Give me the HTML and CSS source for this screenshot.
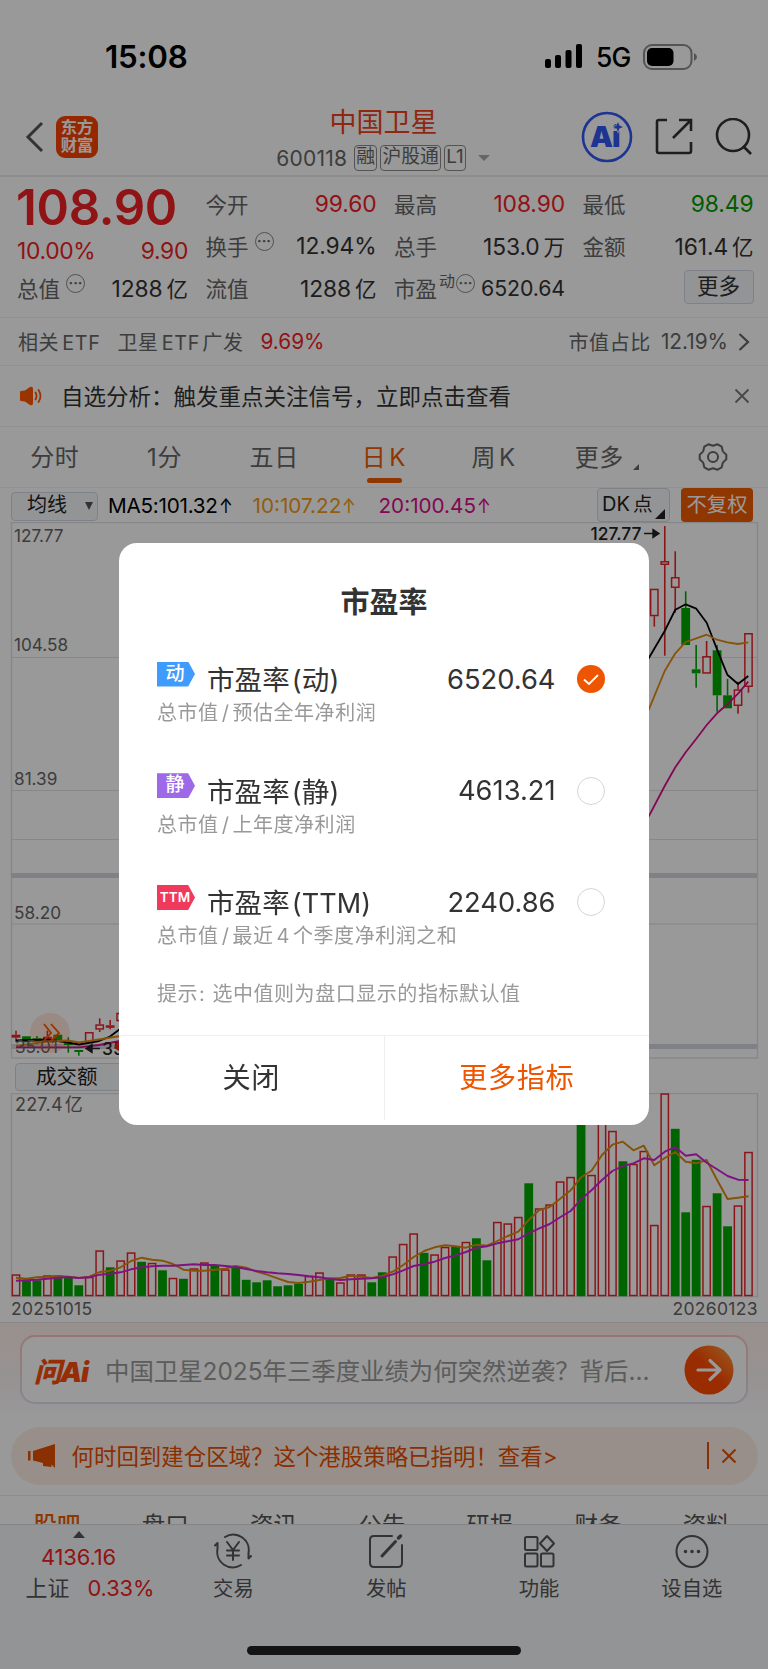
FILE: index.html
```html
<!DOCTYPE html>
<html lang="zh-CN">
<head>
<meta charset="utf-8" />
<title>中国卫星 600118</title>
<link rel="stylesheet" href="styles.css">
</head>

<body>
<div class="page">
	<div class="status">
		<span class="time">15:08</span>
		<svg class="signal" width="40" height="26" viewBox="0 0 40 26"><rect x="1" y="16" width="6" height="9" rx="2"/><rect x="11" y="12" width="6" height="13" rx="2"/><rect x="21.500" y="7" width="6" height="18" rx="2"/><rect x="32" y="1" width="6" height="24" rx="2"/></svg>
		<span class="net">5G</span>
		<svg class="battery" width="56" height="26" viewBox="0 0 56 26"><rect x="1" y="1" width="47.500" height="24" rx="8" fill="none" stroke="#8c8c8c" stroke-width="2"/><rect x="4" y="4" width="26.500" height="18" rx="5"/><path d="M51 9q3 1.500 3 4t-3 4z" fill="#8c8c8c"/></svg>
	</div>

	<div class="header">
		<svg class="back" width="20" height="32" viewBox="0 0 20 32"><path d="M17 2L3 16L17 30"/></svg>
		<div class="logo">东方<br>财富</div>
		<div class="title">
			<h1>中国卫星</h1>
			<p><span class="code">600118</span><i>融</i><i>沪股通</i><i>L1</i><b></b></p>
		</div>
		<svg class="ai" width="52" height="52" viewBox="0 0 52 52"><circle cx="26" cy="26" r="24" fill="none" stroke="#3158f5" stroke-width="2.600"/><text x="9" y="36">Ai</text><path d="M37 11l1.400 3.600l3.600 1.400l-3.600 1.400l-1.400 3.600l-1.400-3.600l-3.600-1.400l3.600-1.400z"/></svg>
		<svg class="share" width="38" height="38" viewBox="0 0 38 38"><path d="M12 2H4Q2 2 2 4V33Q2 35 4 35H34Q36 35 36 33V24M24 2H36V13M36 2L18 20"/></svg>
		<svg class="search" width="38" height="38" viewBox="0 0 38 38"><circle cx="18" cy="17" r="16"/><path d="M28 28L36 36"/></svg>
	</div>

	<div class="quote">
		<div class="col">
			<div class="price">108.90</div>
			<div class="row red chg"><span>10.00%</span><span>9.90</span></div>
			<div class="row"><label>总值<u>···</u></label><span>1288<em>亿</em></span></div>
		</div>
		<div class="col">
			<div class="row"><label>今开</label><span class="red">99.60</span></div>
			<div class="row"><label>换手<u>···</u></label><span>12.94%</span></div>
			<div class="row"><label>流值</label><span>1288<em>亿</em></span></div>
		</div>
		<div class="col">
			<div class="row"><label>最高</label><span class="red">108.90</span></div>
			<div class="row"><label>总手</label><span>153.0<em>万</em></span></div>
			<div class="row"><label>市盈<sup>动</sup><u>···</u></label><span class="pe">6520.64</span></div>
		</div>
		<div class="col">
			<div class="row"><label>最低</label><span class="green">98.49</span></div>
			<div class="row"><label>金额</label><span>161.4<em>亿</em></span></div>
			<div class="row end"><a class="more">更多</a></div>
		</div>
	</div>

	<div class="etf">
		<span class="rel">相关<small>ETF</small></span>
		<span class="fund">卫星<small>ETF</small>广发</span>
		<span class="red pct">9.69%</span>
		<span class="ratio">市值占比</span>
		<span class="pct">12.19%</span>
		<svg width="12" height="20" viewBox="0 0 12 20"><path d="M1.500 2L10 10L1.500 18"/></svg>
	</div>

	<div class="notice">
		<svg width="24" height="20" viewBox="0 0 24 20"><path d="M1 6Q1 5 2 5L6 4.500L11 1Q14 0 14 3V17Q14 20 11 19L6 15.500L2 15Q1 15 1 14z" fill="#ff5500"/><path d="M16.500 6.500Q18.500 10 16.500 13.500M19.500 4Q23.500 10 19.500 16" fill="none" stroke="#ff5500" stroke-width="1.800" stroke-linecap="round"/></svg>
		<span>自选分析：触发重点关注信号，立即点击查看</span>
		<svg class="close" width="16" height="16" viewBox="0 0 16 16"><path d="M1.500 1.500L14.500 14.500M14.500 1.500L1.500 14.500"/></svg>
	</div>

	<div class="tabs">
		<a>分时</a>
		<a>1分</a>
		<a>五日</a>
		<a class="on">日<small>K</small></a>
		<a>周<small>K</small></a>
		<a class="drop">更多</a>
		<a><svg width="30" height="30" viewBox="-1 -1 30 30"><path d="M27.300 16.300V11.700L23.800 8.350L22.700 3.660L18.600 1.300L14 2.700L9.400 1.300L5.300 3.660L4.200 8.350L.7 11.700V16.300L4.200 19.650L5.300 24.300L9.400 26.700L14 25.300L18.600 26.700L22.700 24.300L23.800 19.650z"/><circle cx="14" cy="14" r="5"/></svg></a>
	</div>

	<div class="indicator">
		<a class="btn ma">均线<b></b></a>
		<span class="m5">MA5:101.32<s>↑</s></span>
		<span class="m10">10:107.22<s>↑</s></span>
		<span class="m20">20:100.45<s>↑</s></span>
		<a class="btn dk">DK<em>点</em></a>
		<a class="fq">不复权</a>
	</div>

	<svg class="kline" width="768" height="540" viewBox="0 522 768 540">
		<g class="grid">
			<rect x="11.500" y="522.500" width="746" height="535.500"/>
			<path d="M11 657.500H757M11 790.500H757M11 839.500H757M11 924H757"/>
			<path class="band" d="M11 875.500H757M11 1046.500H757"/>
		</g>
		<g id="candles"></g>
		<g class="lines">
			<path class="l5" d="M16 1040.500L47 1039.500L68 1042.500L79 1044.500L99 1041L110 1036.500L120 1029M640 672L649.300 657.300L664.700 631L675.300 609.700L685.700 604.300L696.300 608.700L706.700 622.700L717 649.300L727.300 674.700L738 684L748.300 676"/>
			<path class="l10" d="M16 1046L47 1041.500L68 1040.500L79 1042.500L99 1039.500L120 1036M640 728L649.300 708.300L664.700 671L675.300 653.300L685.700 642L696.300 638.300L706.700 634.700L717 639.700L727.300 642.300L738 644L748.300 642.300"/>
			<path class="l20" d="M16 1047.300H79L99 1045L120 1041M640 831L649.300 815.300L664.700 786L675.300 767.300L685.700 752.300L696.300 738.700L706.700 725L717 713.300L727.300 704.300L738 693.700L748.300 681.700"/>
		</g>
		<g class="axis">
			<text x="14" y="541.500">127.77</text>
			<text x="14" y="651">104.58</text>
			<text x="14" y="785">81.39</text>
			<text x="14" y="919">58.20</text>
			<text x="15" y="1053">35.01</text>
		</g>
		<g class="peak">
			<text x="590.500" y="540">127.77</text>
			<path d="M644 533.500H657M653 529.500L659 533.500L653 537.500z"/>
			<text x="102" y="1055">35.01</text>
			<path d="M100 1048.500H88M92 1044.500L86 1048.500L92 1052.500z"/>
		</g>
		<circle cx="120" cy="1046" r="5" fill="#f02125"/>
		<circle cx="50" cy="1033" r="20" fill="#ff5500" fill-opacity=".14"/>
		<path d="M44 1024L51 1033L43 1042M51 1024L59 1033L50 1042" fill="none" stroke="#ff5500" stroke-width="1.800"/>
	</svg>

	<div class="volbar"><a class="btn vol">成交额</a></div>

	<svg class="volume" width="768" height="229" viewBox="0 1093 768 229">
		<rect class="frame" x="11.500" y="1093.500" width="746" height="203"/>
		<g id="bars"></g>
		<path id="v5"/>
		<path id="v10"/>
		<text class="max" x="15" y="1110.500">227.4<tspan dx="2">亿</tspan></text>
		<text class="date" x="11" y="1314.500">20251015</text>
		<text class="date" x="672.500" y="1314.500">20260123</text>
	</svg>

	<div class="ask">
		<div class="askbox">
			<span class="asklogo">问Ai</span>
			<span class="question">中国卫星2025年三季度业绩为何突然逆袭？背后...</span>
			<svg width="50" height="50" viewBox="0 0 50 50"><defs><linearGradient id="go" x1="0" y1="1" x2="1" y2="0"><stop offset=".5" stop-color="#ff4a00"/><stop offset="1" stop-color="#ffa040"/></linearGradient></defs><circle cx="25" cy="25" r="24.500" fill="url(#go)"/><path d="M14 25H36M26 15.500L36 25L26 34.500" fill="none" stroke="#fff" stroke-width="3.200" stroke-linecap="round" stroke-linejoin="round"/></svg>
		</div>
	</div>

	<div class="banner">
		<svg width="28" height="24" viewBox="0 0 28 24"><path d="M0 7H2.500V16.500H0zM5 7L27 0V24L23.500 20.500V23L15 22V19L5 16.500z" fill="#e64f00"/></svg>
		<span>何时回到建仓区域？这个港股策略已指明！查看&gt;</span>
		<svg class="x" width="16" height="16" viewBox="0 0 16 16"><path d="M1.500 1.500L14.500 14.500M14.500 1.500L1.500 14.500"/></svg>
	</div>

	<div class="subtabs"><a class="on">股吧</a><a>盘口</a><a>资讯</a><a>公告</a><a>研报</a><a>财务</a><a>资料</a></div>

	<div class="nav">
		<div class="index">
			<b></b>
			<p class="red">4136.16</p>
			<p class="sh">上证<span class="red">0.33%</span></p>
		</div>
		<div class="item">
			<svg width="38" height="36" viewBox="0 0 38 36"><path d="M11 4A15.500 15.500 0 0 1 34.500 20M34.500 25.500V20M34.500 25.500L37 23M27 32A15.500 15.500 0 0 1 3.500 16M3.500 10V16M3.500 10L1 12.500M13 9L19 17L25 9M13 17.500H25M13 22.500H25M19 17V27"/></svg>
			<span>交易</span>
		</div>
		<div class="item">
			<svg width="38" height="36" viewBox="0 0 38 36"><path d="M25 3H7Q3 3 3 7V30Q3 34 7 34H31Q35 34 35 30V12"/><path d="M15 23L28.500 8.500" stroke-width="3"/><path d="M31.500 5L33.500 3" stroke-width="3.500"/></svg>
			<span>发帖</span>
		</div>
		<div class="item">
			<svg width="38" height="36" viewBox="0 0 38 36"><rect x="5" y="4" width="12.500" height="13" rx="1.500"/><path d="M27 3L34 10.500L27 18L20 10.500z"/><rect x="5" y="20.500" width="12.500" height="13" rx="1.500"/><rect x="21" y="20.500" width="12.500" height="13" rx="1.500"/></svg>
			<span>功能</span>
		</div>
		<div class="item">
			<svg width="38" height="36" viewBox="0 0 38 36"><circle cx="19" cy="18.500" r="15.500"/><path d="M12.500 18.500h.01M19 18.500h.01M25.500 18.500h.01" stroke-width="3.600"/></svg>
			<span>设自选</span>
		</div>
		<div class="home"></div>
	</div>
</div>

<div class="mask">
	<div class="dialog">
		<h2>市盈率</h2>
		<div class="opt">
			<div class="line"><span class="tag blue">动</span><span class="name">市盈率<small>(</small>动<small>)</small></span><span class="val">6520.64</span><svg width="28" height="28" viewBox="0 0 28 28"><circle cx="14" cy="14" r="14" fill="#ee5500"/><path d="M7 14.500L12 19L21 10" fill="none" stroke="#fff" stroke-width="1.800"/></svg></div>
			<p>总市值<s>/</s>预估全年净利润</p>
		</div>
		<div class="opt">
			<div class="line"><span class="tag purple">静</span><span class="name">市盈率<small>(</small>静<small>)</small></span><span class="val">4613.21</span><i class="radio"></i></div>
			<p>总市值<s>/</s>上年度净利润</p>
		</div>
		<div class="opt">
			<div class="line"><span class="tag pink">TTM</span><span class="name">市盈率<small>(TTM)</small></span><span class="val">2240.86</span><i class="radio"></i></div>
			<p>总市值<s>/</s>最近<s>4</s>个季度净利润之和</p>
		</div>
		<p class="tip">提示<s>:</s>选中值则为盘口显示的指标默认值</p>
		<div class="foot"><a>关闭</a><a class="go">更多指标</a></div>
	</div>
</div>

<script>
var NS='http://www.w3.org/2000/svg';
var RED='#e8262c', GREEN='#00a800';
var STEP=10.464, X0=16;

function rect(parent,x,y,w,h,color,solid)
{
	var r=document.createElementNS(NS,'rect');
	if(!solid)
	{
		x+=0.75; y+=0.75; w-=1.5; h-=1.5;
	}
	r.setAttribute('x',x);
	r.setAttribute('y',y);
	r.setAttribute('width',w);
	r.setAttribute('height',Math.max(h,1));
	r.setAttribute('fill',solid?color:'none');
	if(!solid)
	{
		r.setAttribute('stroke',color);
		r.setAttribute('stroke-width',1.5);
	}
	parent.appendChild(r);
}

//k线: 序号,涨1跌0,实体上,实体下,最高,最低
var k=[
	[0,1,1034.7,1037.7,1030.7,1042],[1,0,1036.3,1042.3,1036.3,1042.3],[2,0,1038.3,1041.7,1036,1044.3],
	[3,1,1036.7,1039.3,1030.7,1039.3],[4,0,1034.7,1041.7,1034.7,1041.7],[5,0,1043,1045,1037.3,1052.7],
	[6,0,1050,1052,1050,1055.7],[7,1,1032,1043.3,1032,1043.3],[8,1,1024.3,1029.7,1018.3,1032],
	[9,1,1025.3,1027.7,1020,1029.3],[10,1,1012.7,1021.3,1012.7,1021.3],
	[61,1,588.7,616.3,588.7,626.7],[62,1,561,565,526,655.7],[63,1,577,588,551.3,612.7],
	[64,0,608,645,591.3,645],[65,0,669.3,673.3,645,687.7],[66,1,656,673.7,641,673.7],
	[67,0,650.3,695.3,645,711.7],[68,0,695.3,708.3,679,708.3],[69,1,689.3,706,681.7,713.7],
	[70,1,633,687,633,692.7]
];
var oK=document.getElementById('candles');
for(var i=0; i<k.length; i++)
{
	var c=k[i];
	var x=X0+c[0]*STEP;
	var color=c[1]?RED:GREEN;
	rect(oK,x-0.8,c[4],1.6,c[2]-c[4],c[4]<c[2]?color:'none',true);
	rect(oK,x-0.8,c[3],1.6,c[5]-c[3],c[5]>c[3]?color:'none',true);
	rect(oK,x-4.4,c[2],8.8,c[3]-c[2],color,!c[1]);
}

//成交额, 正数涨 负数跌
var v=[22,-16,-16,21,-21,-18.5,-11,19.5,46,-29,36,44,-34.5,33.5,-26,18.5,-17.5,28,34,-30.5,27,-28.5,-16.5,-14,-16,-10,-11,-12.5,20.5,24,-17,14,22,22,-14,-24,
	40,52.5,63,-43.5,42,49.5,-50,54.5,-58,-36,74.5,73,79.5,-113,88,92,115,119.5,-180,121.5,185,165.5,-135,132.5,145.5,71.5,203,-167.5,-84,-136.5,90.5,-103,-70,91,144.5];
var a5=[533,536,532,530,528,530,534,530,516,512,502,483,473,479,482,492,509,512,512,509,506,498,503,515,524,535,546,549,545,540,535,534,527,530,534,528,
	515,495,471,453,442,436,439,443,434,437,423,408,395,360,330,321,296,271,232,212,165,134,125,151,137,196,174,156,185,190,180,240,297,293,289];
var a10=[542,541,539,536,533,531,534,532,524,521,517,508,502,499,497,497,495,493,495,495,498,501,507,513,517,520,522,525,529,532,537,540,538,536,535,532,
	523,511,498,492,485,474,466,456,443,439,430,424,418,400,385,372,352,333,298,271,240,213,198,190,175,180,155,141,167,163,188,208,228,239,240];
var oV=document.getElementById('bars');
for(var i=0; i<v.length; i++)
{
	var h=Math.abs(v[i]);
	rect(oV,X0+i*STEP-4.4,1296.3-h,8.8,h,v[i]>0?RED:GREEN,v[i]<0);
}
function line(id,arr)
{
	var d='';
	for(var i=0; i<arr.length; i++)
	{
		d+=(i?'L':'M')+(X0+i*STEP).toFixed(1)+' '+(1100+arr[i]/3).toFixed(1);
	}
	document.getElementById(id).setAttribute('d',d);
}
line('v5',a5);
line('v10',a10);
</script>
</body>
</html>
```
FILE: styles.css
```css
*{ margin:0; padding:0; box-sizing:border-box;}
body{ width:768px; height:1669px; overflow:hidden; background:#fff; color:#333; font-family:Inter,"Noto Sans CJK SC",sans-serif;}
i,em,u,s{ font-style:normal; text-decoration:none;}
svg{ display:block; flex:none;}
.page{ width:768px; height:1669px; display:flex; flex-direction:column; overflow:hidden;}
.page>*{ flex:none;}
.red{ color:#f02125;}
.green{ color:#009a00;}

.status{ height:100px; padding:13px 0 0 105px; display:flex; align-items:center; color:#000;}
.time{ font-size:31.3px; font-weight:600; width:439px; letter-spacing:-.2px;}
.net{ font-size:26.5px; font-weight:500; width:45px; padding-left:12px; letter-spacing:-1px; margin-right:14px;}
.signal{ margin-top:-1px;}

.header{ height:77px; border-bottom:2px solid #ebebeb; display:flex; align-items:center; padding-left:25px;}
.back path,.share path,.search circle,.search path{ fill:none; stroke:#333; stroke-width:2.6;}
.back path{ stroke:#555; stroke-width:3;}
.back,.ai,.share,.search{ margin-top:-2px;}
.logo{ width:42px; height:42px; margin:-2px 0 0 11px; border-radius:9px; background:#f94400; color:#fff; font-size:16.3px; font-weight:700; line-height:18px; padding-top:2px; text-align:center;}
.title{ width:483px; padding:5px 0 0 84px; text-align:center;}
.title h1{ font-size:27px; font-weight:400; line-height:34px; color:#f0411c; margin-top:-1px; padding-left:4px;}
.title p{ display:flex; justify-content:center; align-items:center; height:36px; gap:2.5px; font-size:21px; color:#666; padding-left:3px; margin-bottom:-3px;}
.title .code{ margin-right:4px; letter-spacing:.2px;}
.title i{ border:1.5px solid #8c8c8c; border-radius:4px; height:26px; line-height:22px; font-size:18.8px; padding:0 1.5px;}
.title b{ border:6.5px solid transparent; border-top-color:#aaa; border-bottom:0; margin-left:9px;}
.ai text{ font-size:29px; font-weight:900; fill:#3158f5; letter-spacing:-1px;}
.ai path{ fill:#3158f5; stroke:#fff; stroke-width:1.2; paint-order:stroke;}
.share{ margin-left:22px;}
.search{ margin-left:22px;}

.quote{ height:141px; border-bottom:1.5px solid #f0f0f0; padding:5px 16px 0 17px; display:grid; grid-template-columns:repeat(4,171px); column-gap:17.5px;}
.row{ height:42px; display:flex; align-items:center; justify-content:space-between; font-size:22.8px; letter-spacing:-.1px;}
.row label{ font-size:21.5px; color:#666; display:flex; align-items:center; letter-spacing:0; white-space:nowrap;}
.row em{ font-size:21.5px; margin-left:4px;}
.price{ height:42px; line-height:50px; font-size:49.2px; font-weight:600; color:#f02125; letter-spacing:-.3px; margin-left:-1px;}
.chg{ padding-top:11px; letter-spacing:-.3px;}
.row u{ width:19px; height:19px; border:1.5px solid #888; border-radius:10px; font-size:14px; line-height:15px; text-align:center; letter-spacing:0; font-weight:700; margin:-8px 0 0 6px;}
.row sup{ font-size:16px; margin:-13px 0 0 2px; line-height:16px;}
.row sup+u{ margin-left:1px;}
.row .pe{ font-size:21.3px; padding-top:2px;}
.end{ justify-content:flex-end;}
.more{ width:70px; height:34px; border:1.5px solid #d3d9e3; border-radius:4px; background:#f5f7fa; font-size:21.5px; line-height:30px; text-align:center; letter-spacing:0; margin-top:-1px;}

.etf{ height:48px; border-bottom:1.5px solid #f2f2f2; padding:0 18px; display:flex; align-items:center; font-size:20px; letter-spacing:.6px; color:#666;}
.etf small{ font-size:19.7px; letter-spacing:.8px; margin:0 2px 0 3px;}
.rel{ width:99.5px;}
.fund{ width:143px;}
.etf .pct{ letter-spacing:0; font-size:20.8px;}
.ratio{ margin-left:auto; margin-right:10px;}
.etf svg{ margin-left:10px;}
.etf path{ fill:none; stroke:#666; stroke-width:2.2;}

.notice{ height:61px; border-bottom:1.5px solid #f0f0f0; padding:0 18px 0 19px; display:flex; align-items:center; font-size:22.5px;}
.notice span{ margin:-3px 0 0 18px; flex:1;}
.notice svg{ margin-top:-1px;}
.close path{ fill:none; stroke:#777; stroke-width:1.8;}

.tabs{ height:61px; border-bottom:1.5px solid #f2f2f2; display:grid; grid-template-columns:repeat(7,109.7px); align-items:center; text-align:center; font-size:24px; color:#666; letter-spacing:.6px;}
.tabs a{ height:60px; line-height:61px; position:relative;}
.tabs small{ font-size:24px; margin-left:3px;}
.tabs .on{ color:#f05a00;}
.tabs .on:after{ content:""; width:35px; height:5.5px; border-radius:3px; background:#f05a00; position:absolute; left:38px; bottom:4px;}
.tabs .drop{ padding-right:8px;}
.drop:after{ content:""; border:3.5px solid #666; border-top-color:transparent; border-left-color:transparent; position:absolute; right:19px; bottom:17px;}
.tabs svg{ margin:15px auto 0; fill:none; stroke:#666; stroke-width:2; stroke-linejoin:round;}

.indicator{ height:34px; display:flex; align-items:center; padding:0 15px 0 11px; font-size:20.7px;}
.btn{ border:1.5px solid #d3d9e3; border-radius:4px; background:#f5f7fa; color:#222; font-size:20px; position:relative;}
.ma{ width:87px; height:29px; line-height:25px; padding-left:15px; margin-right:10px; margin-top:2px;}
.ma b{ border:4.5px solid transparent; border-top:8px solid #555; border-bottom:0; position:absolute; right:4px; top:9px;}
.m5{ width:144.5px; color:#000; letter-spacing:-.25px;}
.m10{ width:126px; color:#f59a16;}
.m20{ color:#dd0a8c; flex:1;}
.indicator s{ display:inline-block; width:14px; margin-left:1px; transform:scaleX(.8); transform-origin:0 50%;}
.indicator span{ white-space:nowrap;}
.dk{ width:73px; height:34px; line-height:31px; padding-left:4px;}
.dk em{ margin-left:3px; font-size:19.5px;}
.dk:after{ content:""; border:5px solid #222; border-top-color:transparent; border-left-color:transparent; position:absolute; right:4px; bottom:2px;}
.fq{ width:72px; height:34px; margin-left:11px; border-radius:4px; background:#f05a00; color:#fff; font-size:20.3px; line-height:33px; text-align:center;}

.grid rect,.frame{ fill:none; stroke:#e2e2e6; stroke-width:1.5;}
.grid path{ stroke:#e0e0e8; stroke-width:1.2;}
.grid .band{ stroke:#d4d7e0; stroke-width:5;}
.lines path{ fill:none; stroke-width:1.8; stroke-linejoin:round;}
.l5{ stroke:#000;}
.l10{ stroke:#e08a10;}
.l20{ stroke:#dd0a8c;}
.axis text{ font-size:17.2px; fill:#666;}
.peak text{ font-size:17.4px; font-weight:500; fill:#222;}
.peak path{ stroke:#222; stroke-width:1.4; fill:#222;}
.volbar{ height:31px; padding:1px 0 0 15px;}
.vol{ display:block; width:112px; height:28px; line-height:25px; font-size:20.5px; padding-left:20px;}
#v5,#v10{ fill:none; stroke:#dc8a10; stroke-width:1.9; stroke-linejoin:round;}
#v10{ stroke:#d41fd8;}
.max{ font-size:18px; fill:#666; letter-spacing:.2px;}
.date{ font-size:17.5px; fill:#666; letter-spacing:.3px;}

.ask{ height:97px; border-top:1.5px solid #dfe0e8; background:linear-gradient(#fff1ea,#fbf4f5 60%,#fff); padding:12px 20px 0;}
.askbox{ height:69px; border:2px solid transparent; border-radius:15px; background:linear-gradient(#fff,#fff) padding-box,linear-gradient(#ffc4bb,#dde0f5) border-box; display:flex; align-items:center; padding:0 12px 0 12px;}
.asklogo{ font-size:27.5px; font-weight:900; font-style:italic; letter-spacing:-1.2px; color:#f94e0c; width:71px; white-space:nowrap;}
.question{ flex:1; font-size:24.4px; color:#999; white-space:nowrap; margin-top:-1px;}
.banner{ width:747px; height:58px; margin:8px 0 10px 10.5px; border-radius:29px; background:#ffeee7; display:flex; align-items:center; padding:0 21px 0 17px; font-size:22.45px; color:#e64f00;}
.banner span{ margin:-2px 0 0 16px; flex:1; background:linear-gradient(#e64f00,#e64f00) right/2px 27px no-repeat;}
.x{ margin-left:12px;}
.x path{ stroke:#e64f00; stroke-width:2;}
.subtabs{ height:29px; border-top:1.5px solid #ececec; padding:11px 0 0 3px; overflow:hidden; display:grid; grid-template-columns:repeat(7,108.2px); text-align:center; font-size:23.5px; color:#555;}
.subtabs .on{ color:#f05a00; font-weight:500;}

.nav{ height:146px; background:#f6f7f9; border-top:1.5px solid #dcdde2; display:grid; grid-template-columns:157px repeat(4,152.8px); grid-template-rows:84px; font-size:20.3px; color:#555; text-align:center;}
.index{ padding-top:6px;}
.index b{ display:block; width:0; margin:0 auto; border:6px solid transparent; border-bottom:7px solid #555; border-top:0;}
.index p{ height:31px; line-height:38px; font-size:21.9px; white-space:nowrap;}
.index .sh{ padding-left:23px;}
.index span{ margin-left:18px;}
.index .red{ letter-spacing:-.1px;}
.item{ padding-top:8px; line-height:37px;}
.item svg{ margin:0 auto 1px; fill:none; stroke:#555; stroke-width:2; stroke-linecap:round; stroke-linejoin:round;}
.home{ width:274px; height:9px; margin-top:37px; border-radius:5px; background:#222; grid-column:1/-1; justify-self:center;}

.mask{ position:fixed; left:0; top:0; width:768px; height:1669px; background:rgba(0,0,0,.4); display:flex; align-items:center; justify-content:center;}
.dialog{ width:530px; height:582px; margin-top:-1px; border-radius:18px; background:#fff; color:#333; display:flex; flex-direction:column;}
.dialog h2{ font-size:29px; font-weight:700; line-height:40px; text-align:center; padding-top:40px; height:115px;}
.opt{ height:111.7px; padding:0 44.5px 0 38px;}
.line{ height:42px; display:flex; align-items:center; font-size:27.5px;}
.tag{ width:38px; height:25px; margin-top:-10px; font-size:19px; font-weight:500; line-height:23px; color:#fff; text-align:center; padding-right:2px; clip-path:polygon(0 0,82% 0,100% 50%,82% 100%,0 100%);}
.blue{ background:#409bff;}
.purple{ background:#9d69e8;}
.pink{ background:#f03a5c; font-size:13.5px; font-weight:600; line-height:25px;}
.name{ margin:-2px 0 0 12px; flex:1; letter-spacing:.1px;}
.name small{ font-size:27px; margin-left:2px;}
.name small+small{ margin-left:0;}
.val{ font-size:27.3px; margin-right:21px;}
.radio{ width:28px; height:28px; border:1.5px solid #d4d4d4; border-radius:14px;}
.opt p,.tip{ font-size:20px; letter-spacing:.55px; color:#999; line-height:26px;}
.opt s{ margin:0 3px;}
.tip{ padding:0 38px; margin-top:-12px; height:43px;}
.tip s{ margin:0 7px 0 1px;}
.foot{ margin-top:auto; height:90px; border-top:1.5px solid #eee; display:flex; font-size:28.2px;}
.foot a{ flex:1; text-align:center; line-height:84px; height:84px; letter-spacing:.6px;}
.foot .go{ color:#ee5500; border-left:1.5px solid #eee;}
```
